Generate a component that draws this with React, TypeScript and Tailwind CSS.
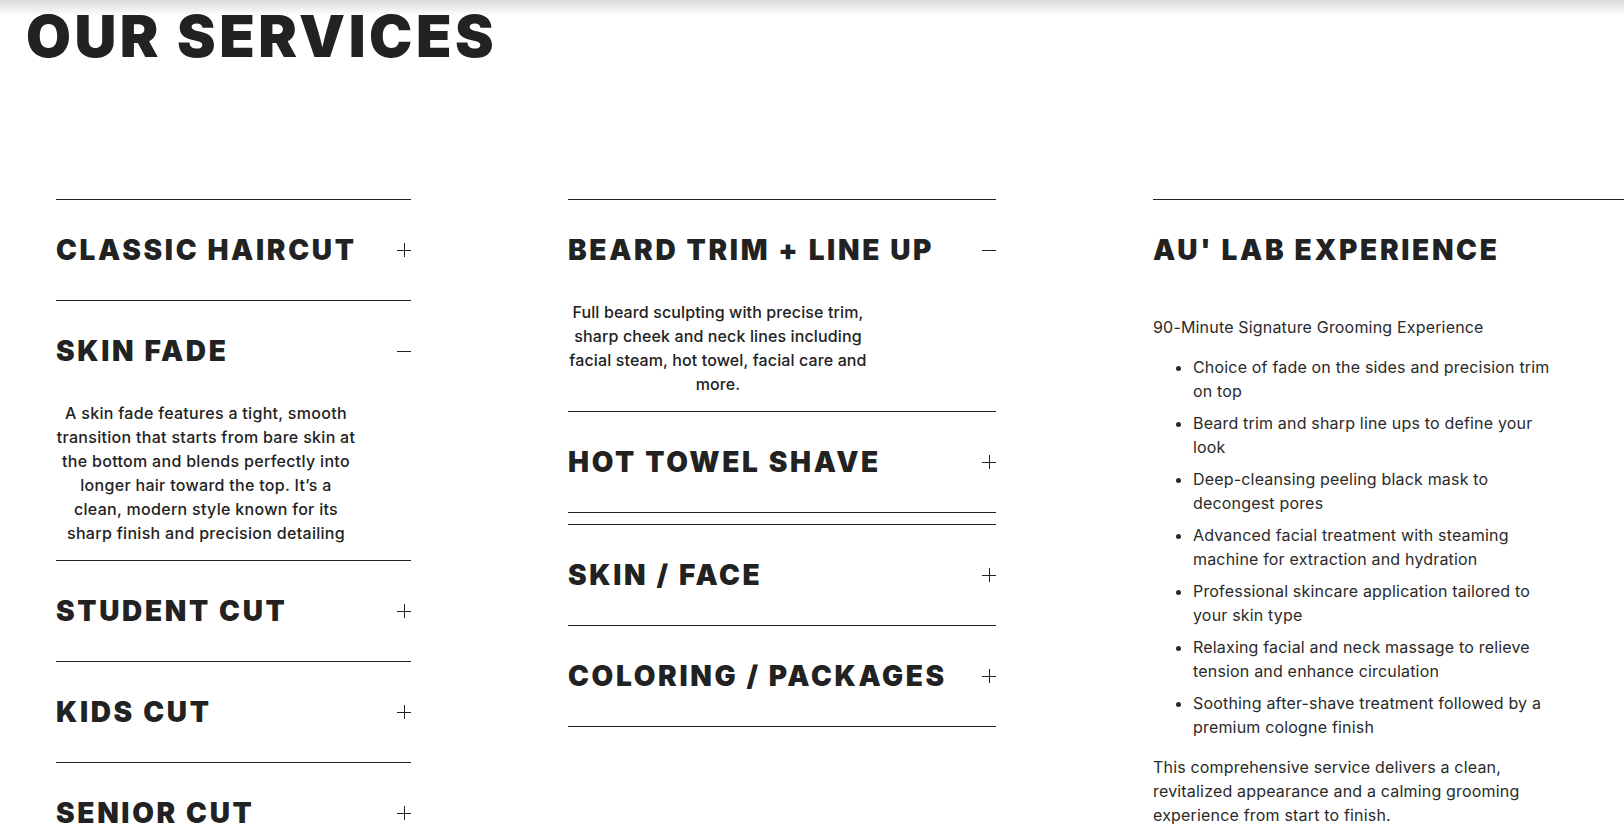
import { useState } from 'react';

type Service = {
  title: string;
  body?: string;
  bodyClass?: string;
  gapAfter?: boolean;
};

const leftServices: Service[] = [
  { title: 'CLASSIC HAIRCUT' },
  {
    title: 'SKIN FADE',
    body: 'A skin fade features a tight, smooth transition that starts from bare skin at the bottom and blends perfectly into longer hair toward the top. It\u2019s a clean, modern style known for its sharp finish and precision detailing',
    bodyClass: 'tracking-[0.3px]',
  },
  { title: 'STUDENT CUT' },
  { title: 'KIDS CUT' },
  { title: 'SENIOR CUT' },
];

const middleServices: Service[] = [
  {
    title: 'BEARD TRIM + LINE UP',
    body: 'Full beard sculpting with precise trim, sharp cheek and neck lines including facial steam, hot towel, facial care and more.',
    bodyClass: 'tracking-[0.12px]',
  },
  { title: 'HOT TOWEL SHAVE', gapAfter: true },
  { title: 'SKIN / FACE' },
  { title: 'COLORING / PACKAGES' },
];

const labSteps = [
  'Choice of fade on the sides and precision trim on top',
  'Beard trim and sharp line ups to define your look',
  'Deep-cleansing peeling black mask to decongest pores',
  'Advanced facial treatment with steaming machine for extraction and hydration',
  'Professional skincare application tailored to your skin type',
  'Relaxing facial and neck massage to relieve tension and enhance circulation',
  'Soothing after-shave treatment followed by a premium cologne finish',
];

const headingFont = "font-['Inter','Liberation_Sans',sans-serif]";
const bodyFont = "font-['Inter','Liberation_Sans',sans-serif]";

const ToggleIcon = ({ open }: { open: boolean }) => (
  <svg width="14" height="14" viewBox="0 0 14 14" className="shrink-0 text-[#222]">
    <line x1="0" y1="7.5" x2="14" y2="7.5" stroke="currentColor" strokeWidth="1" />
    {!open && <line x1="7.5" y1="0" x2="7.5" y2="14" stroke="currentColor" strokeWidth="1" />}
  </svg>
);

const ServiceList = ({ items, defaultOpen }: { items: Service[]; defaultOpen: string }) => {
  const [openItem, setOpenItem] = useState<string | null>(defaultOpen);

  return (
    <div className="flex flex-col">
      {items.map((item, i) => {
        const isOpen = openItem === item.title;
        const isLast = i === items.length - 1;
        return (
          <div
            key={item.title}
            className={`border-t border-[#222] ${isLast || item.gapAfter ? 'border-b' : ''} ${item.gapAfter ? 'mb-[11px]' : ''}`}
          >
            <button
              onClick={() => setOpenItem(isOpen ? null : item.title)}
              className="flex h-[100px] w-full items-center justify-between text-left"
            >
              <span className={`${headingFont} text-[28px] font-black leading-none tracking-[0.095em] text-[#222]`}>
                {item.title}
              </span>
              <ToggleIcon open={isOpen} />
            </button>

            {/* Expanded description */}
            {isOpen && item.body && (
              <p className={`${bodyFont} ${item.bodyClass ?? ''} w-[300px] pb-[15px] text-center text-[16px] font-medium leading-6 text-[#222]`}>
                {item.body}
              </p>
            )}
          </div>
        );
      })}
    </div>
  );
};

export default function App() {
  return (
    <div className="min-h-[831px] w-full overflow-hidden bg-white">
      {/* Title */}
      <div className="bg-[linear-gradient(to_bottom,#dadada_0px,#ffffff_16px)] pl-[26px] pt-[7px]">
        <h1 className={`${headingFont} text-[58px] font-black leading-none tracking-[0.06em] text-[#222]`}>
          OUR SERVICES
        </h1>
      </div>

      {/* Columns */}
      <div className="mt-[134px] flex items-start gap-[157px] pl-[56px]">
        <div className="w-[355px] shrink-0">
          <ServiceList items={leftServices} defaultOpen="SKIN FADE" />
        </div>

        <div className="w-[428px] shrink-0">
          <ServiceList items={middleServices} defaultOpen="BEARD TRIM + LINE UP" />
        </div>

        <div className="flex-1 border-t border-[#222]">
          <div className="flex h-[100px] items-center">
            <h3 className={`${headingFont} text-[28px] font-black leading-none tracking-[0.095em] text-[#222]`}>
              AU&apos; LAB EXPERIENCE
            </h3>
          </div>
          <div className={`${bodyFont} w-[405px] pt-[15px] text-[16px] leading-6 tracking-[0.18px] text-[#2a2a2a]`}>
            <p>90-Minute Signature Grooming Experience</p>
            <ul className="mt-4 flex list-disc flex-col gap-2 pl-[40px]">
              {labSteps.map((step) => (
                <li key={step}>{step}</li>
              ))}
            </ul>
            <p className="mt-4">
              This comprehensive service delivers a clean, revitalized appearance and a calming grooming
              experience from start to finish.
            </p>
          </div>
        </div>
      </div>
    </div>
  );
}
